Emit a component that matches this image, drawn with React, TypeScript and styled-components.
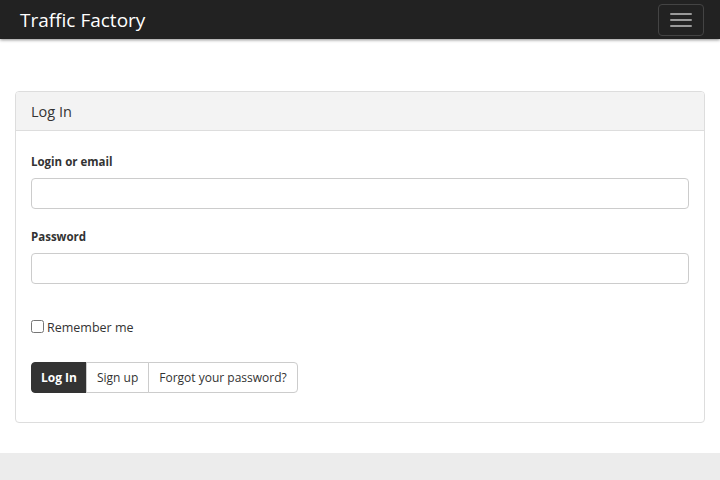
import React from "react";
import styled, { createGlobalStyle } from "styled-components";

const Global = createGlobalStyle`
  html, body { margin: 0; padding: 0; background: #fff; }
  body { font-family: "Open Sans", "Liberation Sans", sans-serif; color: #333; }
  * { box-sizing: border-box; }
`;

const Page = styled.div`
  display: flex;
  flex-direction: column;
  min-height: 480px;
`;

const Navbar = styled.nav`
  height: 39px;
  background: #222;
  display: flex;
  align-items: center;
  justify-content: space-between;
  padding: 0 16px 0 20px;
  box-shadow: 0 1px 3px rgba(0, 0, 0, 0.45);
  position: relative;
  z-index: 1;
`;

const Brand = styled.a`
  color: #fff;
  font-size: 19px;
  text-decoration: none;
`;

const Toggle = styled.button`
  width: 46px;
  height: 32px;
  border: 1px solid #444;
  border-radius: 4px;
  background: transparent;
  display: flex;
  flex-direction: column;
  align-items: center;
  justify-content: center;
  gap: 4px;
  padding: 0;
`;

const Bar = styled.span`
  display: block;
  width: 22px;
  height: 2px;
  background: #999;
  border-radius: 1px;
`;

const Main = styled.main`
  flex: 1;
  padding: 52px 15px 30px;
`;

const Card = styled.section`
  border: 1px solid #ddd;
  border-radius: 4px;
  background: #fff;
`;

const CardHeader = styled.div`
  height: 39px;
  background: #f3f3f3;
  border-bottom: 1px solid #ddd;
  border-radius: 3px 3px 0 0;
  padding: 0 15px;
  display: flex;
  align-items: center;
  font-size: 14.5px;
  color: #333;
`;

const CardBody = styled.form`
  padding: 24px 15px 29px;
  display: flex;
  flex-direction: column;
`;

const Group = styled.div<{ $mb: number }>`
  display: flex;
  flex-direction: column;
  margin-bottom: ${(p) => p.$mb}px;
`;

const Label = styled.label`
  font-size: 11.5px;
  font-weight: 700;
  color: #333;
  margin-bottom: 9px;
  line-height: 14px;
`;

const Input = styled.input`
  height: 31px;
  border: 1px solid #ccc;
  border-radius: 4px;
  padding: 4px 10px;
  font-size: 13px;
  font-family: inherit;
`;

const CheckRow = styled.label`
  display: flex;
  align-items: center;
  font-size: 12.5px;
  color: #333;
  margin-bottom: 26px;
`;

const Check = styled.input`
  width: 13px;
  height: 13px;
  margin: 0 3px 0 0;
  position: relative;
  top: -1px;
`;

const BtnGroup = styled.div`
  display: flex;
`;

const Btn = styled.button<{ $primary?: boolean }>`
  height: 31px;
  padding: 0 ${(p) => (p.$primary ? 9 : 10)}px;
  font-family: inherit;
  font-size: 12px;
  font-weight: ${(p) => (p.$primary ? 700 : 400)};
  color: ${(p) => (p.$primary ? "#fff" : "#333")};
  background: ${(p) => (p.$primary ? "#333" : "#fff")};
  border: 1px solid ${(p) => (p.$primary ? "#333" : "#ccc")};
  margin-left: -1px;
  &:first-child {
    margin-left: 0;
    border-radius: 4px 0 0 4px;
  }
  &:last-child {
    border-radius: 0 4px 4px 0;
  }
`;

const Footer = styled.footer`
  height: 27px;
  background: #ececec;
`;

export default function App() {
  return (
    <Page>
      <Global />
      <Navbar>
        <Brand href="#">Traffic Factory</Brand>
        <Toggle aria-label="Toggle navigation">
          <Bar />
          <Bar />
          <Bar />
        </Toggle>
      </Navbar>
      <Main>
        <Card>
          <CardHeader>Log In</CardHeader>
          <CardBody onSubmit={(e) => e.preventDefault()}>
            <Group $mb={21}>
              <Label>Login or email</Label>
              <Input type="text" />
            </Group>
            <Group $mb={35}>
              <Label>Password</Label>
              <Input type="password" />
            </Group>
            <CheckRow>
              <Check type="checkbox" />
              Remember me
            </CheckRow>
            <BtnGroup>
              <Btn $primary type="submit">Log In</Btn>
              <Btn type="button">Sign up</Btn>
              <Btn type="button">Forgot your password?</Btn>
            </BtnGroup>
          </CardBody>
        </Card>
      </Main>
      <Footer />
    </Page>
  );
}
